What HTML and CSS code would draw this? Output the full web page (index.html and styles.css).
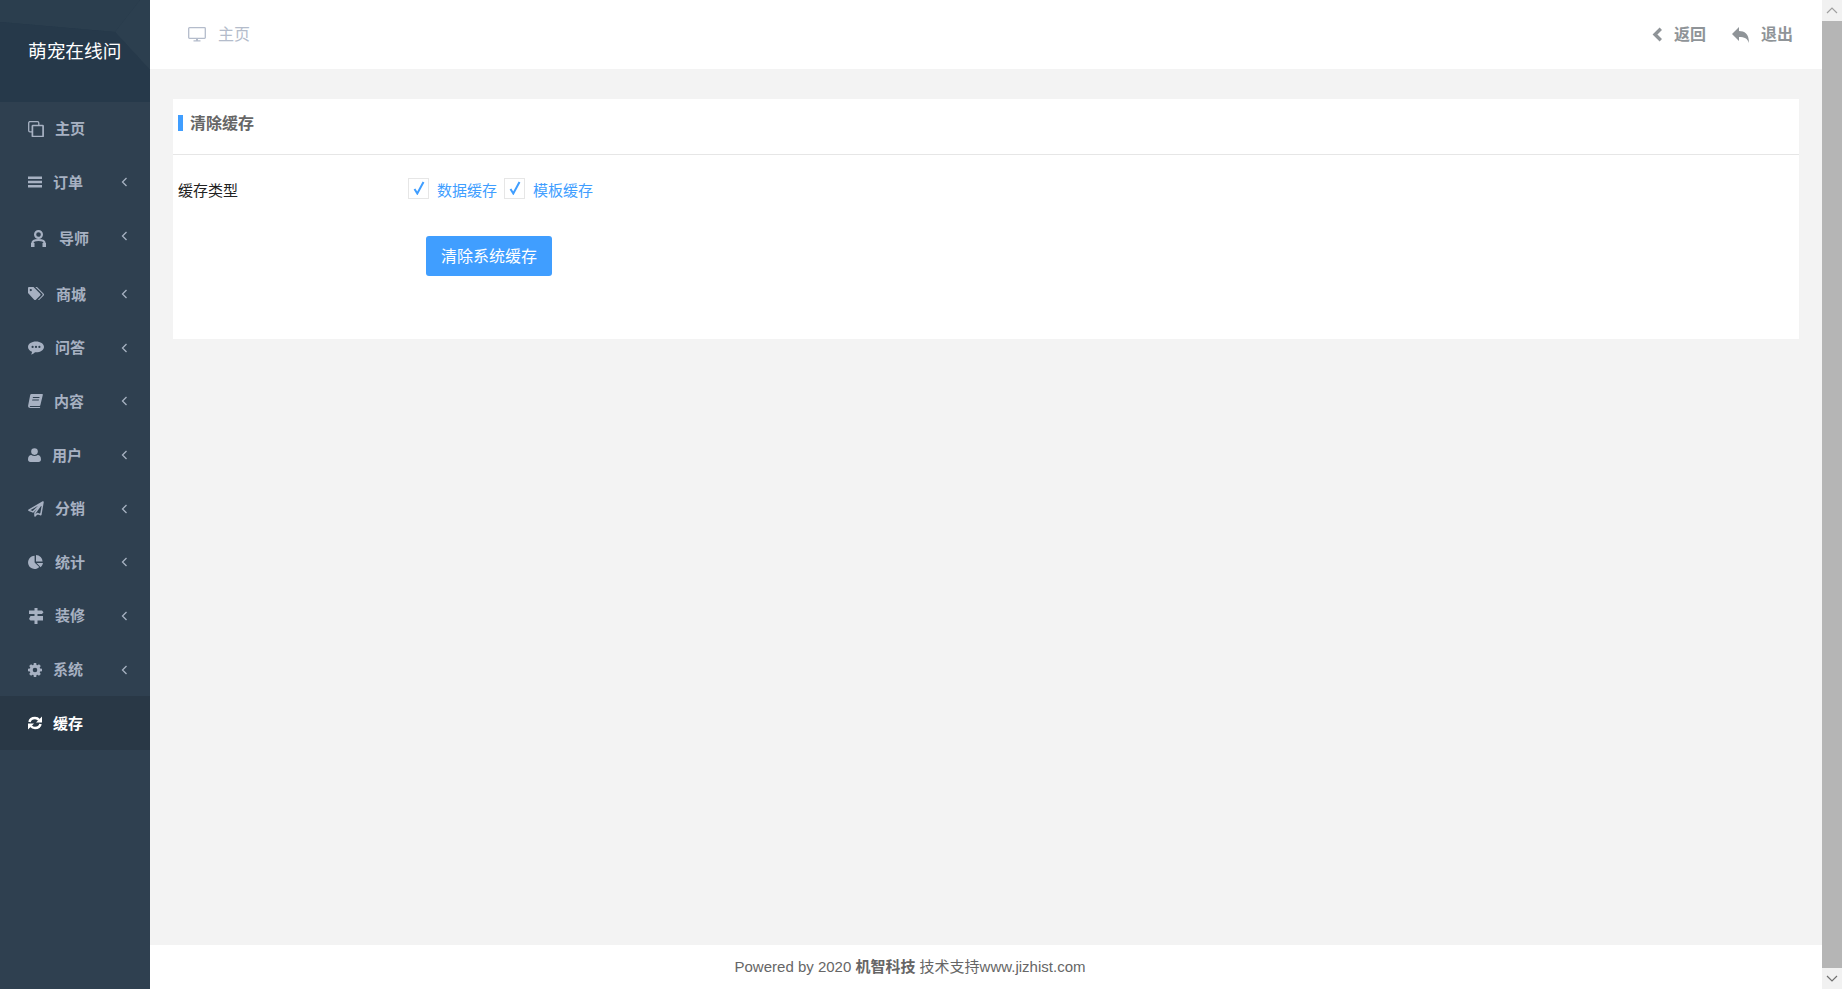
FILE: index.html
```html
<!DOCTYPE html>
<html lang="zh-CN">
  <head>
    <meta charset="UTF-8" />
    <meta name="viewport" content="width=device-width, initial-scale=1.0" />
    <title>清除缓存</title>
    <link rel="stylesheet" href="styles.css">
  </head>
  <body>
    <div class="app">
      <aside class="sidebar">
        <div class="logo">
          <svg class="logo-bg" width="150" height="102" viewBox="0 0 150 102">
            <polygon points="0,0 140,0 115,32 0,22" fill="#2b3e4e" />
            <polygon points="115,32 140,0 150,0 150,70" fill="#2c3f4f" />
            <polygon points="0,22 115,32 150,70 150,102 0,102" fill="#26394a" />
          </svg>
          <span class="logo-text">萌宠在线问</span>
        </div>
        <ul class="menu">
          <li class="menu-item">
            <svg class="icon" width="16" height="16" viewBox="0 0 16 16"><path fill="none" stroke="currentColor" stroke-width="1.300" d="M4 .7H2A1.300 1.300 0 0 0 .7 2v7.500A1.300 1.300 0 0 0 2 10.800h2M1 .7h8.500A1.300 1.300 0 0 1 10.800 2v2" /><path fill="none" stroke="currentColor" stroke-width="1.700" d="M5 4.500h9.500a.6.6 0 0 1 .6.6v9.800a.6.6 0 0 1-.6.6H5a.6.6 0 0 1-.6-.6V5.100a.6.6 0 0 1 .6-.6z" /></svg>
            <span class="menu-label">主页</span>
          </li>
          <li class="menu-item">
            <svg class="icon" width="14" height="14" viewBox="0 0 14 14"><path fill="currentColor" d="M0 1.500h14v2.400H0zM0 5.800h14v2.400H0zM0 10.100h14v2.400H0z" /></svg>
            <span class="menu-label">订单</span>
            <svg class="arrow" width="7" height="10" viewBox="0 0 7 10"><path fill="none" stroke="currentColor" stroke-width="1.300" d="M5.500 1 1.500 5l4 4" /></svg>
          </li>
          <li class="menu-item menu-item-tall">
            <svg class="icon" width="20" height="17" viewBox="0 0 20 17"><path fill="none" stroke="currentColor" stroke-width="2.200" d="M10.500 1.100a3.400 3.400 0 1 1 0 6.800 3.400 3.400 0 0 1 0-6.800zM4.400 16v-2.800c0-2.200 2-3.200 6.100-3.200s6.100 1 6.100 3.200V16" /><path fill="currentColor" d="M3 13h3.500v4H3zM14.500 13H18v4h-3.500z" /></svg>
            <span class="menu-label">导师</span>
            <svg class="arrow arrow-up" width="7" height="10" viewBox="0 0 7 10"><path fill="none" stroke="currentColor" stroke-width="1.300" d="M5.500 1 1.500 5l4 4" /></svg>
          </li>
          <li class="menu-item">
            <svg class="icon" width="17" height="14" viewBox="0 0 17 14"><path fill="currentColor" d="M0 1.200C0 .5.500 0 1.200 0h4.300l6.700 6.700c.5.500.5 1.200 0 1.700l-4.300 4.300c-.5.500-1.200.5-1.700 0L0 6zM2.800 2a1.100 1.100 0 1 0 0 2.200 1.100 1.100 0 0 0 0-2.200z" /><path fill="currentColor" d="M7.300 0h1.700l6.700 6.700c.5.500.5 1.200 0 1.700l-4.300 4.300c-.5.500-1 .5-1.500.2l4.400-4.500c.5-.5.5-1.200 0-1.700z" /></svg>
            <span class="menu-label">商城</span>
            <svg class="arrow" width="7" height="10" viewBox="0 0 7 10"><path fill="none" stroke="currentColor" stroke-width="1.300" d="M5.500 1 1.500 5l4 4" /></svg>
          </li>
          <li class="menu-item">
            <svg class="icon" width="16" height="14" viewBox="0 0 16 14"><path fill="currentColor" fill-rule="evenodd" d="M8 .5c4.400 0 8 2.400 8 5.400s-3.600 5.400-8 5.400h-1C6 12.500 4.600 13.300 3 13.500c.6-.8 1-1.600 1-2.800C1.600 9.800 0 8 0 5.900 0 2.900 3.600.5 8 .5zM4.600 4.800a1.100 1.100 0 1 0 0 2.200 1.100 1.100 0 0 0 0-2.200zm3.400 0a1.100 1.100 0 1 0 0 2.200 1.100 1.100 0 0 0 0-2.200zm3.400 0a1.100 1.100 0 1 0 0 2.200 1.100 1.100 0 0 0 0-2.200z" /></svg>
            <span class="menu-label">问答</span>
            <svg class="arrow" width="7" height="10" viewBox="0 0 7 10"><path fill="none" stroke="currentColor" stroke-width="1.300" d="M5.500 1 1.500 5l4 4" /></svg>
          </li>
          <li class="menu-item">
            <svg class="icon" width="15" height="14" viewBox="0 0 15 14"><path fill="currentColor" fill-rule="evenodd" d="M3.400 0H14c.6 0 1 .4.800 1l-2.400 10c-.1.600-.6 1-1.200 1H2.500c-.5 0-.8.500-.7.800.1.200.4.300.7.300h9.700l-.3.900H2.400C1 14 0 13 .1 11.700L2.200 1C2.300.4 2.800 0 3.400 0zM5 3l-.3 1.100h6.600L11.600 3zm-.6 2.400-.3 1h6.600l.3-1z" /></svg>
            <span class="menu-label">内容</span>
            <svg class="arrow" width="7" height="10" viewBox="0 0 7 10"><path fill="none" stroke="currentColor" stroke-width="1.300" d="M5.500 1 1.500 5l4 4" /></svg>
          </li>
          <li class="menu-item">
            <svg class="icon" width="13" height="14" viewBox="0 0 13 14"><circle cx="6.500" cy="3.600" r="3.300" fill="currentColor" /><path fill="currentColor" d="M0 11.500C0 8.500 1.300 7 3.300 7c.8.700 1.900 1.100 3.200 1.100S8.900 7.700 9.700 7c2 0 3.300 1.500 3.300 4.500 0 1.500-1 2.500-2.400 2.500H2.400C1 14 0 13 0 11.500z" /></svg>
            <span class="menu-label">用户</span>
            <svg class="arrow" width="7" height="10" viewBox="0 0 7 10"><path fill="none" stroke="currentColor" stroke-width="1.300" d="M5.500 1 1.500 5l4 4" /></svg>
          </li>
          <li class="menu-item">
            <svg class="icon" width="16" height="16" viewBox="0 0 16 16"><path fill="none" stroke="currentColor" stroke-width="1.500" stroke-linejoin="round" d="M15 1 .9 9.200l4 1.700L15 1l-8 11v3l2.300-2.600 3.500 1.400z" /></svg>
            <span class="menu-label">分销</span>
            <svg class="arrow" width="7" height="10" viewBox="0 0 7 10"><path fill="none" stroke="currentColor" stroke-width="1.300" d="M5.500 1 1.500 5l4 4" /></svg>
          </li>
          <li class="menu-item">
            <svg class="icon" width="16" height="14" viewBox="0 0 16 14"><path fill="currentColor" d="M6.600.8v6.600l4.700 4.700A6.600 6.600 0 1 1 6.600.8zM8 0a6.600 6.600 0 0 1 6.600 6.600H8zM8.600 8H15a6.600 6.600 0 0 1-2.300 4.200z" /></svg>
            <span class="menu-label">统计</span>
            <svg class="arrow" width="7" height="10" viewBox="0 0 7 10"><path fill="none" stroke="currentColor" stroke-width="1.300" d="M5.500 1 1.500 5l4 4" /></svg>
          </li>
          <li class="menu-item">
            <svg class="icon" width="16" height="16" viewBox="0 0 16 16"><path fill="currentColor" d="M6.500 0h3v2.500H14l1.500 1.700L14 6H9.500v2H15v4.500H9.500V16h-3v-3.500H2.500L1 11l1.500-3h4V6H1V2.500h5.500z" /></svg>
            <span class="menu-label">装修</span>
            <svg class="arrow" width="7" height="10" viewBox="0 0 7 10"><path fill="none" stroke="currentColor" stroke-width="1.300" d="M5.500 1 1.500 5l4 4" /></svg>
          </li>
          <li class="menu-item">
            <svg class="icon" width="14" height="14" viewBox="0 0 14 14"><path fill="currentColor" fill-rule="evenodd" d="M5.800 0h2.400l.3 1.900 1 .4L11 1.200l1.800 1.800-1.100 1.500.4 1L14 5.800v2.400l-1.900.3-.4 1 1.100 1.500-1.800 1.800-1.500-1.100-1 .4L8.200 14H5.800l-.3-1.900-1-.4L3 12.800 1.200 11l1.100-1.500-.4-1L0 8.200V5.800l1.900-.3.400-1L1.200 3 3 1.200l1.500 1.100 1-.4zM7 4.700a2.300 2.300 0 1 0 0 4.600 2.300 2.300 0 0 0 0-4.600z" /></svg>
            <span class="menu-label">系统</span>
            <svg class="arrow" width="7" height="10" viewBox="0 0 7 10"><path fill="none" stroke="currentColor" stroke-width="1.300" d="M5.500 1 1.500 5l4 4" /></svg>
          </li>
          <li class="menu-item menu-item-active">
            <svg class="icon" width="14" height="14" viewBox="0 0 14 14"><path fill="none" stroke="currentColor" stroke-width="2.500" d="M1.500 6C2 3.500 4.200 2 7 2c1.800 0 3.200.8 4.200 2M12.500 8c-.5 2.500-2.700 4-5.500 4-1.800 0-3.200-.8-4.200-2" /><path fill="currentColor" d="M14 .5v6H8zM0 13.500v-6h6z" /></svg>
            <span class="menu-label">缓存</span>
          </li>
        </ul>
      </aside>

      <div class="main">
        <header class="topbar">
          <div class="topbar-left">
            <svg class="topbar-icon" width="18" height="15" viewBox="0 0 18 15"><path fill="none" stroke="currentColor" stroke-width="1.300" d="M1.500.7h15c.5 0 .8.300.8.800v9c0 .5-.3.800-.8.800h-15c-.5 0-.8-.3-.8-.8v-9c0-.5.300-.8.800-.8z" /><path fill="currentColor" d="M8 11.500h2v2H8zM5.500 13.300h7v1.200h-7z" /></svg>
            <span class="topbar-text">主页</span>
          </div>
          <div class="topbar-right">
            <a class="topbar-link">
              <svg width="10" height="15" viewBox="0 0 10 15"><path fill="none" stroke="currentColor" stroke-width="3.400" d="M8.800 1.800 3 7.500l5.800 5.700" /></svg>
              <span class="topbar-text">返回</span>
            </a>
            <a class="topbar-link">
              <svg width="17" height="16" viewBox="0 0 17 16"><path fill="currentColor" d="M7 0v4c5.500 0 10 2.500 10 12-1.500-4.500-4.500-6-10-6v4L0 7z" /></svg>
              <span class="topbar-text">退出</span>
            </a>
          </div>
        </header>

        <div class="content">
          <section class="card">
            <div class="card-title">
              <i class="card-mark"></i>
              <span class="card-text">清除缓存</span>
            </div>
            <div class="form-row">
              <label class="form-label">缓存类型</label>
              <div class="check-group">
                <label class="check">
                  <span class="check-box">
                    <svg width="12" height="14" viewBox="0 0 12 14"><path fill="none" stroke="currentColor" stroke-width="2" d="M1.500 8 4.300 12.500 10.500 1" /></svg>
                  </span>
                  <span class="check-text">数据缓存</span>
                </label>
                <label class="check">
                  <span class="check-box">
                    <svg width="12" height="14" viewBox="0 0 12 14"><path fill="none" stroke="currentColor" stroke-width="2" d="M1.500 8 4.300 12.500 10.500 1" /></svg>
                  </span>
                  <span class="check-text">模板缓存</span>
                </label>
              </div>
            </div>
            <button class="clear-button">清除系统缓存</button>
          </section>
        </div>

        <footer class="footer">
          Powered by 2020 <b>机智科技</b> 技术支持www.jizhist.com
        </footer>
      </div>

      <div class="scrollbar">
        <div class="scroll-btn">
          <svg width="12" height="7" viewBox="0 0 12 7"><path fill="none" stroke="#a0a0a0" stroke-width="1.200" d="M1 6 6 1l5 5" /></svg>
        </div>
        <div class="scroll-thumb"></div>
        <div class="scroll-btn">
          <svg width="12" height="7" viewBox="0 0 12 7"><path fill="none" stroke="#707070" stroke-width="1.200" d="M1 1l5 5 5-5" /></svg>
        </div>
      </div>
    </div>
  </body>
</html>
```

FILE: styles.css
```css
* {
  box-sizing: border-box;
}
body {
  font-family: "Liberation Sans", "Noto Sans CJK SC", sans-serif;
  margin: 0;
  background-color: #f3f3f3;
  overflow: hidden;
}
.app {
  display: flex;
  height: 100vh;
}
.sidebar {
  width: 150px;
  flex-shrink: 0;
  background-color: #2f4050;
}
.logo {
  position: relative;
  height: 102px;
  display: flex;
  align-items: center;
  padding-left: 28px;
  background-color: #26394a;
}
.logo-bg {
  position: absolute;
  left: 0;
  top: 0;
}
.logo-text {
  position: relative;
  padding-bottom: 4px;
  color: #fff;
  font-size: 18.7px;
}
.menu {
  list-style: none;
  margin: 0;
  padding: 0;
}
.menu-item {
  display: flex;
  align-items: center;
  height: 53.67px;
  padding: 0 22px 0 28px;
  color: #a7b1c2;
  font-size: 15px;
  font-weight: 600;
}
.menu-item-tall {
  height: 57.9px;
}
.menu-item-active {
  background-color: #293846;
  color: #fff;
}
.icon {
  flex-shrink: 0;
  margin-right: 11px;
}
.menu-label {
  flex: 1;
  padding-bottom: 2px;
}
.arrow {
  flex-shrink: 0;
}
.arrow-up {
  margin-bottom: 4px;
}
.main {
  flex: 1;
  min-width: 0;
  display: flex;
  flex-direction: column;
}
.topbar {
  height: 69px;
  flex-shrink: 0;
  display: flex;
  align-items: center;
  justify-content: space-between;
  padding: 0 29px 0 38px;
  background: white;
  font-size: 16px;
}
.topbar-text {
  padding-bottom: 3px;
}
.topbar-left {
  display: flex;
  align-items: center;
  color: #b4bccb;
}
.topbar-icon {
  margin-right: 12px;
}
.topbar-right {
  display: flex;
  align-items: center;
  gap: 26px;
}
.topbar-link {
  display: flex;
  align-items: center;
  gap: 12px;
  color: #8f9498;
  font-weight: 600;
}
.content {
  flex: 1;
  padding: 30px 23px 0;
}
.card {
  height: 240px;
  background: white;
}
.card-title {
  display: flex;
  align-items: center;
  height: 56px;
  padding: 0 0 8px 5px;
  border-bottom: 1px solid #e6e6e6;
  color: #666;
  font-size: 16px;
  font-weight: 600;
}
.card-mark {
  width: 5px;
  height: 16px;
  margin-right: 7px;
  background-color: #409eff;
}
.card-text {
  padding-bottom: 2px;
}
.form-row {
  display: flex;
  align-items: center;
  height: 24px;
  margin-top: 21px;
  font-size: 15px;
}
.form-label {
  width: 235px;
  padding: 2px 0 0 5px;
  color: #222;
}
.check-group {
  display: flex;
  gap: 7px;
}
.check {
  display: flex;
  align-items: center;
  gap: 8px;
  color: #409eff;
}
.check-box {
  width: 21px;
  height: 21px;
  display: flex;
  align-items: center;
  justify-content: center;
  border: 1px solid #e6e6e6;
}
.check-text {
  padding-top: 2px;
}
.clear-button {
  display: block;
  width: 126px;
  height: 40px;
  margin: 36px 0 0 253px;
  padding: 0 0 2px;
  border: none;
  border-radius: 3px;
  background-color: #409eff;
  color: white;
  font-family: inherit;
  font-size: 16px;
}
.footer {
  height: 44px;
  flex-shrink: 0;
  padding-right: 152px;
  background: white;
  color: #666;
  font-size: 15px;
  line-height: 44px;
  text-align: center;
}
.scrollbar {
  width: 20px;
  flex-shrink: 0;
  display: flex;
  flex-direction: column;
  background-color: #b5b5b5;
}
.scroll-btn {
  height: 21px;
  display: flex;
  align-items: center;
  justify-content: center;
  background-color: #f1f1f1;
}
.scroll-thumb {
  flex: 1;
}
```
